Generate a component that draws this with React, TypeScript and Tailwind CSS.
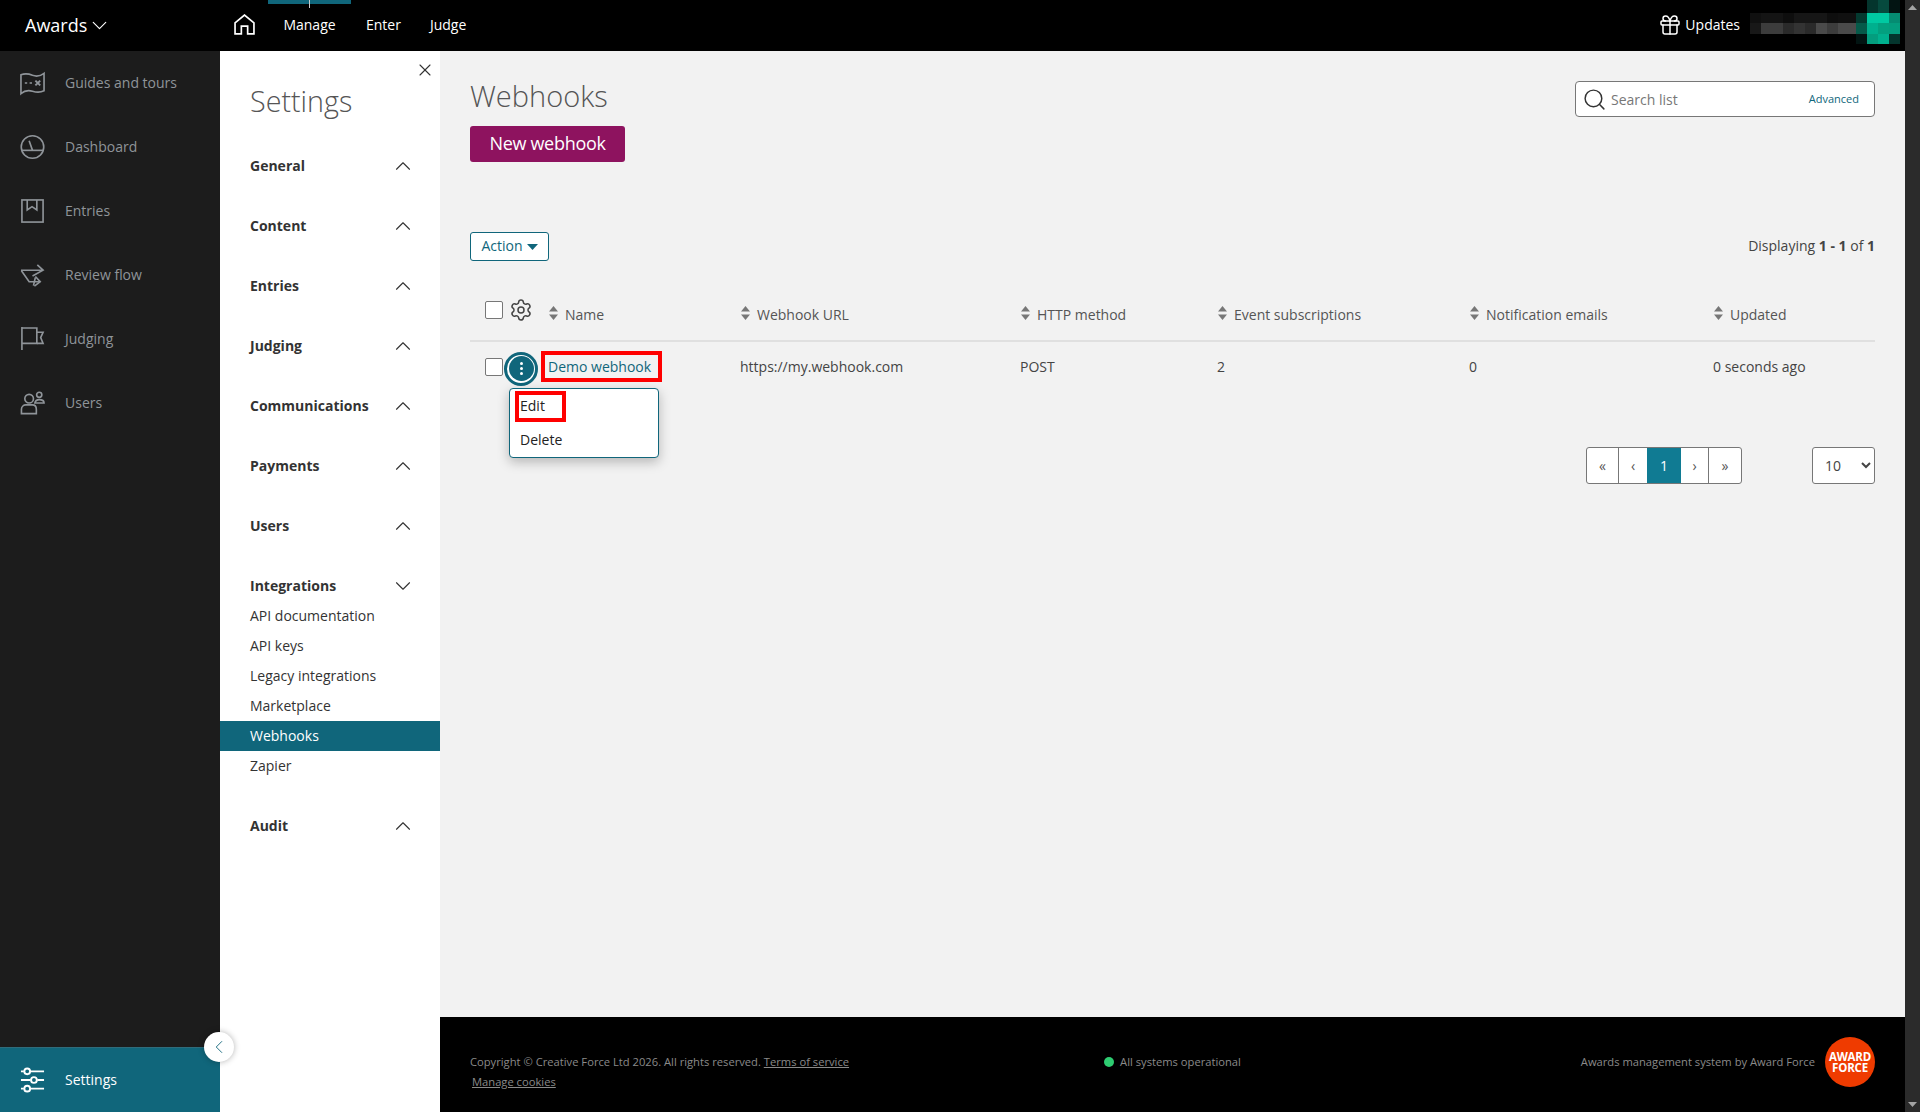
import { Gift, Search, Settings as Gear, X, ChevronUp, ChevronDown, ChevronLeft } from 'lucide-react';

const teal = '#10667b';

function GuidesIcon() {
  return (
    <svg width="26" height="26" viewBox="0 0 26 26" fill="none" stroke="#8f9499" strokeWidth="1.7">
      <path d="M1 4.5 C5 3 8 3 13 5 C18 6.8 21 6 25 3 V21 C21 23 18 23 13 21.5 C8 20 5 20.5 1 24 Z" />
      <path d="M5 13h2.5M10 13h2.5" />
      <path d="M16 10.5l5 5M21 10.5l-5 5" strokeWidth="2" />
    </svg>
  );
}
function DashIcon() {
  return (
    <svg width="26" height="26" viewBox="0 0 26 26" fill="none" stroke="#8f9499" strokeWidth="1.7">
      <circle cx="13" cy="13" r="11.7" />
      <path d="M1.6 16.5H24.4" />
      <path d="M9.5 6.5L13 16.5" />
    </svg>
  );
}
function EntriesIcon() {
  return (
    <svg width="26" height="26" viewBox="0 0 26 26" fill="none" stroke="#8f9499" strokeWidth="1.7">
      <rect x="2" y="1.5" width="22" height="23" />
      <path d="M7.5 1.5V12L12.5 8.5L17.5 12V1.5" />
    </svg>
  );
}
function ReviewIcon() {
  return (
    <svg width="26" height="26" viewBox="0 0 26 26" fill="none" stroke="#8f9499" strokeWidth="1.7">
      <path d="M1 8H24M18 2.5L24 8L13 14" />
      <path d="M1.5 8.5L9.5 20H21M16 15.5L14 24" />
      <path d="M16 14.5L21 20L15 24.5" />
    </svg>
  );
}
function FlagIcon() {
  return (
    <svg width="26" height="26" viewBox="0 0 26 26" fill="none" stroke="#8f9499" strokeWidth="1.7">
      <path d="M2 0.5V24.5" />
      <path d="M2 1.5H17.5V17.5H2" />
      <path d="M17.5 6H24L21.5 11.5L24 17.5H17.5" />
    </svg>
  );
}
function UsersIcon() {
  return (
    <svg width="26" height="26" viewBox="0 0 26 26" fill="none" stroke="#8f9499" strokeWidth="1.7">
      <circle cx="9.5" cy="8.5" r="4.5" />
      <circle cx="20" cy="4.5" r="2.7" />
      <path d="M1.5 24V19.5C1.5 16.5 4 15 6 15H13C15.5 15 17 17 17 19.5V24Z" />
      <path d="M15.5 13C16 10.5 18 9.5 20 9.5C23 9.5 25 11 25 13Z" />
    </svg>
  );
}
function SlidersIcon() {
  return (
    <svg width="26" height="26" viewBox="0 0 26 26" fill="none" stroke="#ffffff" strokeWidth="2">
      <path d="M1 4h3M11 4h14M1 13h10M18 13h7M1 22h3M11 22h14" />
      <circle cx="7.5" cy="4" r="3" />
      <circle cx="14.5" cy="13" r="3" />
      <circle cx="7.5" cy="22" r="3" />
    </svg>
  );
}

const sideItems = [
  { label: 'Guides and tours', icon: <GuidesIcon /> },
  { label: 'Dashboard', icon: <DashIcon /> },
  { label: 'Entries', icon: <EntriesIcon /> },
  { label: 'Review flow', icon: <ReviewIcon /> },
  { label: 'Judging', icon: <FlagIcon /> },
  { label: 'Users', icon: <UsersIcon /> },
];

const closedBefore = ['General', 'Content', 'Entries', 'Judging', 'Communications', 'Payments', 'Users'];
const integrationLinks = ['API documentation', 'API keys', 'Legacy integrations', 'Marketplace', 'Webhooks', 'Zapier'];

// blurred user name + avatar, drawn as blocks
const pixels: [number, number, number, number, string][] = [
  [0, 13, 11, 10, '#101010'], [11, 13, 22, 10, '#141414'], [33, 13, 11, 10, '#0e0e0e'], [44, 13, 33, 10, '#161616'], [77, 13, 11, 10, '#0e0e0e'], [88, 13, 18, 10, '#101010'],
  [0, 23, 11, 11, '#181818'], [11, 23, 22, 11, '#3c3c3c'], [33, 23, 11, 11, '#2a2a2a'], [44, 23, 11, 11, '#333333'], [55, 23, 11, 11, '#2a2a2a'], [66, 23, 11, 11, '#4a4a4a'], [77, 23, 11, 11, '#3c3c3c'], [88, 23, 18, 11, '#4a4a4a'],
  [117, 0, 11, 13, '#04352d'], [128, 0, 11, 13, '#064a3e'], [139, 0, 11, 13, '#021412'],
  [106, 13, 11, 10, '#043a30'], [117, 13, 22, 10, '#00c9a2'], [139, 13, 11, 10, '#058c72'],
  [106, 23, 11, 11, '#055a49'], [117, 23, 11, 11, '#00b08e'], [128, 23, 11, 11, '#03a07f'], [139, 23, 11, 11, '#049d7e'],
  [106, 34, 11, 10, '#021412'], [117, 34, 11, 10, '#049d7e'], [128, 34, 11, 10, '#00b08e'], [139, 34, 11, 10, '#04352d'],
];

const tableCols = 'grid-cols-[270px_280px_197px_252px_244px_162px]';

function SortArrows() {
  return (
    <svg width="9" height="14" viewBox="0 0 9 14" className="shrink-0" fill="#777777">
      <path d="M4.5 0L9 5.5H0Z" />
      <path d="M4.5 14L0 8.5H9Z" />
    </svg>
  );
}

function HeaderCell({ label }: { label: string }) {
  return (
    <div className="flex items-end gap-[7px] pl-[1px]">
      <span className="mb-[5px]"><SortArrows /></span>
      <span className="leading-5">{label}</span>
    </div>
  );
}

export default function App() {
  return (
    <div className="flex h-[1112px] w-full overflow-hidden font-['Open_Sans',sans-serif] text-[14px] text-[#555555]">
      <div className="flex min-w-0 flex-1 flex-col">
        <header className="flex h-[51px] shrink-0 items-center bg-black text-white">
          <div className="mb-[2px] flex w-[234px] items-center pl-[25px]">
            <span className="text-[18px] leading-none">Awards</span>
            <ChevronDown size={25} strokeWidth={1.1} className="mt-[1px]" />
          </div>
          <svg width="21" height="21" viewBox="0 0 20 20" fill="none" stroke="#ffffff" strokeWidth="1.6" className="mb-[2px]">
            <path d="M1 19V8.5L10 1L19 8.5V19H13V11.5H7V19H1Z" />
          </svg>
          <nav className="ml-[13px] flex items-center">
            <div className="relative flex h-[51px] w-[83px] items-center justify-center pb-[2px]">
              <span className="absolute left-0 top-0 h-[4px] w-full bg-[#10667b]" />
              <span className="absolute left-[41px] top-0 h-[8px] w-px bg-[#cccccc]" />
              Manage
            </div>
            <span className="mb-[2px] ml-[15px]">Enter</span>
            <span className="mb-[2px] ml-[29px]">Judge</span>
          </nav>
          <div className="ml-auto flex items-center">
            <Gift size={24} strokeWidth={1.5} className="mb-[2px]" />
            <span className="mb-[2px] ml-[3px]">Updates</span>
            <svg width="150" height="44" viewBox="0 0 150 44" className="mb-[7px] ml-[10px] mr-[5px]">
              {pixels.map(([x, y, w, h, c], i) => (
                <rect key={i} x={x} y={y} width={w} height={h} fill={c} />
              ))}
            </svg>
          </div>
        </header>

        <div className="flex min-h-0 flex-1">
          <aside className="relative flex w-[220px] shrink-0 flex-col justify-between bg-[#1c1c1c]">
            <ul>
              {sideItems.map(item => (
                <li key={item.label} className="flex h-[64px] items-center gap-[20px] pl-[20px] text-[#8f9499]">
                  <span className="flex h-[26px] w-[25px] items-center justify-center">{item.icon}</span>
                  <span className="mb-[2px]">{item.label}</span>
                </li>
              ))}
            </ul>
            <div className="flex h-[65px] items-center gap-[20px] border-t border-[#2f6c7b] bg-[#10667b] pl-[20px] text-white">
              <span className="flex h-[26px] w-[25px] items-center justify-center"><SlidersIcon /></span>
              <span className="mb-[2px]">Settings</span>
            </div>
            <button className="absolute bottom-[50px] left-[204px] z-10 flex h-[30px] w-[30px] items-center justify-center rounded-full bg-white shadow-[0_0_6px_rgba(0,0,0,0.3)]">
              <ChevronLeft size={22} strokeWidth={1} color={teal} />
            </button>
          </aside>

          <nav className="relative w-[220px] shrink-0 bg-white text-[#333333]">
            <X size={20} strokeWidth={1.3} className="absolute right-[5px] top-[9px]" />
            <h2 className="pl-[30px] pt-[29px] text-[28.7px] font-light leading-[41px] text-[#555555]">Settings</h2>
            <div className="mt-[14px]">
              {closedBefore.map(name => (
                <div key={name} className="flex h-[60px] items-center justify-between pl-[30px] pr-[24px]">
                  <span className="font-bold">{name}</span>
                  <ChevronUp size={26} strokeWidth={1} className="mt-[1px]" />
                </div>
              ))}
              <div className="flex h-[60px] items-center justify-between pl-[30px] pr-[24px]">
                <span className="font-bold">Integrations</span>
                <ChevronDown size={26} strokeWidth={1} className="mt-[1px]" />
              </div>
              <ul className="-mt-[14px]">
                {integrationLinks.map(link => (
                  <li key={link} className={link === 'Webhooks' ? 'flex h-[30px] items-center bg-[#10667b] pb-[2px] pl-[30px] text-white' : 'flex h-[30px] items-center pb-[2px] pl-[30px]'}>
                    {link}
                  </li>
                ))}
              </ul>
              <div className="mt-[14px] flex h-[60px] items-center justify-between pl-[30px] pr-[24px]">
                <span className="font-bold">Audit</span>
                <ChevronUp size={26} strokeWidth={1} className="mt-[1px]" />
              </div>
            </div>
          </nav>

          <main className="flex min-w-0 flex-1 flex-col bg-[#f2f2f2]">
            <div className="flex-1 px-[30px] pt-[30px]">
              <div className="flex items-start justify-between">
                <div>
                  <h1 className="h-[45px] text-[29px] font-light leading-[30px] text-[#555555]">Webhooks</h1>
                  <button className="h-[36px] w-[155px] rounded-[3px] bg-[#8e135f] pb-[2px] text-[18px] tracking-[-0.3px] text-white">New webhook</button>
                </div>
                <div className="flex h-[36px] w-[300px] items-center rounded-[4px] border border-[#777777] bg-white pl-[6px] pr-[15px]">
                  <Search size={25} strokeWidth={1.4} color="#333333" />
                  <span className="ml-[4px] text-[#777777]">Search list</span>
                  <span className="ml-auto mt-[1px] text-[11px] text-[#10667b]">Advanced</span>
                </div>
              </div>

              <div className="mt-[70px] flex h-[29px] items-center justify-between">
                <button className="flex h-[29px] w-[79px] items-center justify-center gap-[4px] rounded-[3px] border border-[#10667b] bg-white pb-[2px] text-[#10667b]">
                  Action
                  <svg width="11" height="6" viewBox="0 0 11 6" fill="#10667b" className="mt-[2px]"><path d="M0 0H11L5.5 6Z" /></svg>
                </button>
                <span className="mb-[2px] text-[#444444]">Displaying <b>1 - 1</b> of <b>1</b></span>
              </div>

              <div className="relative">
                <div className={`grid h-[81px] ${tableCols} items-end border-b-[2px] border-[#e0e0e0] pb-[15px]`}>
                  <div className="flex items-end pl-[15px]">
                    <span className="mb-[6px] h-[18px] w-[18px] rounded-[2px] border border-[#777777] bg-white" />
                    <Gear size={24} strokeWidth={1.5} color="#444444" className="mb-[3px] ml-[6px]" />
                    <span className="mb-[5px] ml-[16px]"><SortArrows /></span>
                    <span className="ml-[7px] leading-5">Name</span>
                  </div>
                  <HeaderCell label="Webhook URL" />
                  <HeaderCell label="HTTP method" />
                  <HeaderCell label="Event subscriptions" />
                  <HeaderCell label="Notification emails" />
                  <HeaderCell label="Updated" />
                </div>

                <div className={`grid h-[48px] ${tableCols} items-center`}>
                  <div className="flex items-center pl-[15px]">
                    <span className="mt-[2px] h-[18px] w-[18px] rounded-[2px] border border-[#777777] bg-white" />
                    <span className="ml-[1px] mt-[5px] flex h-[34px] w-[34px] items-center justify-center rounded-full border-[3px] border-[#10667b] bg-white">
                      <span className="flex h-[25px] w-[25px] flex-col items-center justify-center gap-[2px] rounded-full bg-[#10667b]">
                        <i className="h-[3px] w-[3px] rounded-full bg-white" />
                        <i className="h-[3px] w-[3px] rounded-full bg-white" />
                        <i className="h-[3px] w-[3px] rounded-full bg-white" />
                      </span>
                    </span>
                    <a className="ml-[3px] flex h-[31px] w-[121px] items-center border-[4px] border-[#ff0000] pl-[3px] text-[#10667b]">Demo webhook</a>
                  </div>
                  <span className="text-[#444444]">https://my.webhook.com</span>
                  <span className="text-[#444444]">POST</span>
                  <span className="text-[#444444]">2</span>
                  <span className="text-[#444444]">0</span>
                  <span className="text-[#444444]">0 seconds ago</span>
                </div>

                <div className="absolute left-[39px] top-[127px] z-10 h-[70px] w-[150px] rounded-[4px] border border-[#10667b] bg-white pl-[10px] text-[#222222] shadow-[0_4px_12px_rgba(0,0,0,0.25)]">
                  <div className="-ml-[5px] mt-[2px] flex h-[31px] w-[51px] items-center border-[4px] border-[#ff0000] pb-[2px] pl-[1px]">Edit</div>
                  <div className="mt-[8px] leading-5">Delete</div>
                </div>
              </div>

              <div className="mt-[57px] flex items-start justify-end">
                <div className="flex h-[37px] overflow-hidden rounded-[3px] border border-[#777777] bg-white text-[#555555]">
                  <span className="flex w-[32px] items-center justify-center border-r border-[#777777]">«</span>
                  <span className="flex w-[28px] items-center justify-center">‹</span>
                  <span className="flex w-[34px] items-center justify-center bg-[#107b93] text-white">1</span>
                  <span className="flex w-[28px] items-center justify-center border-r border-[#777777]">›</span>
                  <span className="flex w-[32px] items-center justify-center">»</span>
                </div>
                <select defaultValue="10" className="ml-[70px] h-[37px] w-[63px] rounded-[3px] border border-[#777777] bg-white pl-[8px] text-[#444444]">
                  <option value="10">10</option>
                </select>
              </div>
            </div>

            <footer className="grid h-[95px] shrink-0 grid-cols-3 items-center bg-black px-[30px] pb-[5px] text-[11.2px] text-[#8a8a8a]">
              <div className="pt-[19px] leading-[20px]">
                <div>Copyright © Creative Force Ltd 2026. All rights reserved. <u>Terms of service</u></div>
                <div className="pl-[2px]"><u>Manage cookies</u></div>
              </div>
              <div className="flex items-center justify-center gap-[6px]">
                <span className="h-[10px] w-[10px] rounded-full bg-[#2ecc71]" />
                <span>All systems operational</span>
              </div>
              <div className="flex items-center justify-end gap-[10px]">
                <span>Awards management system by Award Force</span>
                <span className="flex h-[50px] w-[50px] flex-col items-center justify-center rounded-full bg-[#ef3b00] text-[11.5px] font-bold leading-[11px] tracking-[-0.2px] text-white">
                  <span>AWARD</span>
                  <span>FORCE</span>
                </span>
              </div>
            </footer>
          </main>
        </div>
      </div>

      <div className="flex w-[15px] shrink-0 flex-col items-center justify-between bg-[#2b2b2b] py-[5px]">
        <svg width="9" height="5" viewBox="0 0 9 5" fill="#a3a3a3"><path d="M4.5 0L9 5H0Z" /></svg>
        <svg width="9" height="5" viewBox="0 0 9 5" fill="#a3a3a3"><path d="M0 0H9L4.5 5Z" /></svg>
      </div>
    </div>
  );
}
